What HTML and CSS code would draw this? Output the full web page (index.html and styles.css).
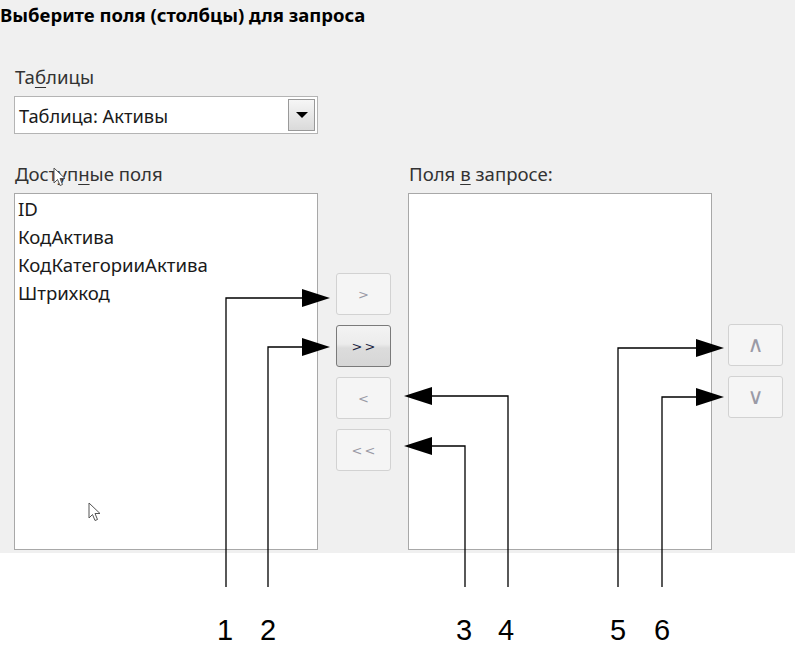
FILE: index.html
```html
<!DOCTYPE html>
<html lang="ru">
<head>
    <meta charset="utf-8">
    <title>Выберите поля</title>
    <link rel="stylesheet" href="styles.css">
</head>
<body>
    <div class="dialog">
        <h1 class="title">Выберите поля (столбцы) для запроса</h1>

        <div class="table-pick">
            <label class="label">Та<u>б</u>лицы</label>
            <div class="combo">
                <span class="combo-text">Таблица: Активы</span>
                <span class="combo-btn"><span class="tri"></span></span>
            </div>
        </div>

        <div class="fields">
            <div class="col">
                <label class="label">Доступ<u>н</u>ые поля</label>
                <ul class="listbox">
                    <li>ID</li>
                    <li>КодАктива</li>
                    <li>КодКатегорииАктива</li>
                    <li>Штрихкод</li>
                </ul>
            </div>
            <div class="move-btns">
                <button class="btn" disabled>&gt;</button>
                <button class="btn active">&gt;&gt;</button>
                <button class="btn" disabled>&lt;</button>
                <button class="btn" disabled>&lt;&lt;</button>
            </div>
            <div class="col col-right">
                <label class="label">Поля <u>в</u> запросе:</label>
                <ul class="listbox"></ul>
            </div>
            <div class="order-btns">
                <button class="btn btn-order" disabled>&#x2227;</button>
                <button class="btn btn-order" disabled>&#x2228;</button>
            </div>
        </div>
    </div>

    <!-- mouse cursors -->
    <svg class="cursor cursor-top" width="14" height="20" viewBox="0 0 14 20">
        <path d="M1 1 V16 L4.5 12.5 L7 18.5 L9.5 17.5 L7 11.5 H12 Z" fill="#fff" stroke="#555" stroke-width="1"/>
    </svg>
    <svg class="cursor cursor-bottom" width="14" height="20" viewBox="0 0 14 20">
        <path d="M1 1 V16 L4.5 12.5 L7 18.5 L9.5 17.5 L7 11.5 H12 Z" fill="#fff" stroke="#555" stroke-width="1"/>
    </svg>

    <!-- callouts -->
    <svg class="callouts" width="795" height="648" viewBox="0 0 795 648">
        <g fill="none" stroke="#000" stroke-width="1.3">
            <path d="M226 587 V298 H303"/>
            <path d="M268 587 V347 H303"/>
            <path d="M465 587 V446 H431"/>
            <path d="M508 587 V396 H431"/>
            <path d="M618 587 V348 H697"/>
            <path d="M662 587 V397 H697"/>
        </g>
        <g fill="#000">
            <polygon points="302,289 330,298 302,307"/>
            <polygon points="302,338 330,347 302,356"/>
            <polygon points="432,437 404,446 432,455"/>
            <polygon points="432,387 404,396 432,405"/>
            <polygon points="696,339 724,348 696,357"/>
            <polygon points="696,388 724,397 696,406"/>
        </g>
        <g class="nums" text-anchor="middle">
            <text x="225" y="640">1</text>
            <text x="268" y="640">2</text>
            <text x="464" y="640">3</text>
            <text x="506" y="640">4</text>
            <text x="618" y="640">5</text>
            <text x="662" y="640">6</text>
        </g>
    </svg>
</body>
</html>
```

FILE: styles.css
```css
body {
    margin: 0;
    padding: 0;
    background: #fff;
    font-family: "Noto Sans", "Open Sans", sans-serif;
    color: #1a1a1a;
    position: relative;
    width: 795px;
    height: 648px;
    overflow: hidden;
}

.dialog {
    background-color: #f0f0f0;
    height: 553px;
    box-sizing: border-box;
    padding-top: 3px;
}

.title {
    margin: 0;
    font-size: 18.5px;
    font-weight: bold;
    color: #000;
    line-height: 24px;
}

.label {
    display: block;
    font-size: 18.6px;
    line-height: 24px;
    color: #333;
    margin-left: 15px;
}

.label u {
    text-decoration-thickness: 1px;
    text-underline-offset: 3px;
}

.table-pick {
    margin-top: 38px;
}

.combo {
    margin: 7px 0 0 14px;
    width: 304px;
    height: 38px;
    box-sizing: border-box;
    border: 1px solid #b4b4b4;
    background: #fff;
    display: flex;
    align-items: center;
    justify-content: space-between;
    padding: 2px;
}

.combo-text {
    font-size: 18.3px;
    padding-left: 2px;
    color: #1a1a1a;
}

.combo-btn {
    width: 27px;
    height: 32px;
    box-sizing: border-box;
    border: 1px solid #999;
    background: linear-gradient(#f6f6f6, #dadada);
    display: flex;
    align-items: center;
    justify-content: center;
}

.tri {
    width: 0;
    height: 0;
    border-left: 6px solid transparent;
    border-right: 6px solid transparent;
    border-top: 6px solid #000;
}

.fields {
    margin-top: 28px;
    display: flex;
    align-items: flex-start;
}

.col .listbox {
    margin: 7px 0 0 14px;
}

.col-right .label {
    margin-left: 1px;
}

.col-right .listbox {
    margin-left: 0;
}

.listbox {
    list-style: none;
    width: 304px;
    height: 357px;
    box-sizing: border-box;
    border: 1px solid #a8a8a8;
    background: #fff;
    padding: 1px 0 0 3px;
}

.listbox li {
    font-size: 18.6px;
    line-height: 28px;
    color: #1a1a1a;
}

.move-btns {
    margin: 111px 17px 0 18px;
    display: flex;
    flex-direction: column;
    gap: 10px;
}

.order-btns {
    margin: 162px 0 0 16px;
    display: flex;
    flex-direction: column;
    gap: 10px;
}

.btn {
    width: 55px;
    height: 42px;
    box-sizing: border-box;
    border: 1px solid #d2d2d2;
    border-radius: 3px;
    background: #f5f5f5;
    color: #9a9aa6;
    font-family: "DejaVu Sans", sans-serif;
    font-size: 13px;
    letter-spacing: 2px;
    padding: 0 0 0 2px;
}

.btn-order {
    font-size: 22px;
    letter-spacing: 0;
    padding: 0;
    line-height: 1;
}

.btn.active {
    border-color: #7a7a7a;
    background: linear-gradient(#f3f3f3 0%, #ececec 45%, #dcdcdc 55%, #d6d6d6 100%);
    color: #1c2540;
}

.cursor {
    position: absolute;
}

.cursor-top {
    left: 53px;
    top: 167px;
}

.cursor-bottom {
    left: 88px;
    top: 502px;
}

.callouts {
    position: absolute;
    left: 0;
    top: 0;
    pointer-events: none;
}

.nums text {
    font-family: "Liberation Sans", Arial, sans-serif;
    font-size: 29px;
    fill: #000;
}
```
